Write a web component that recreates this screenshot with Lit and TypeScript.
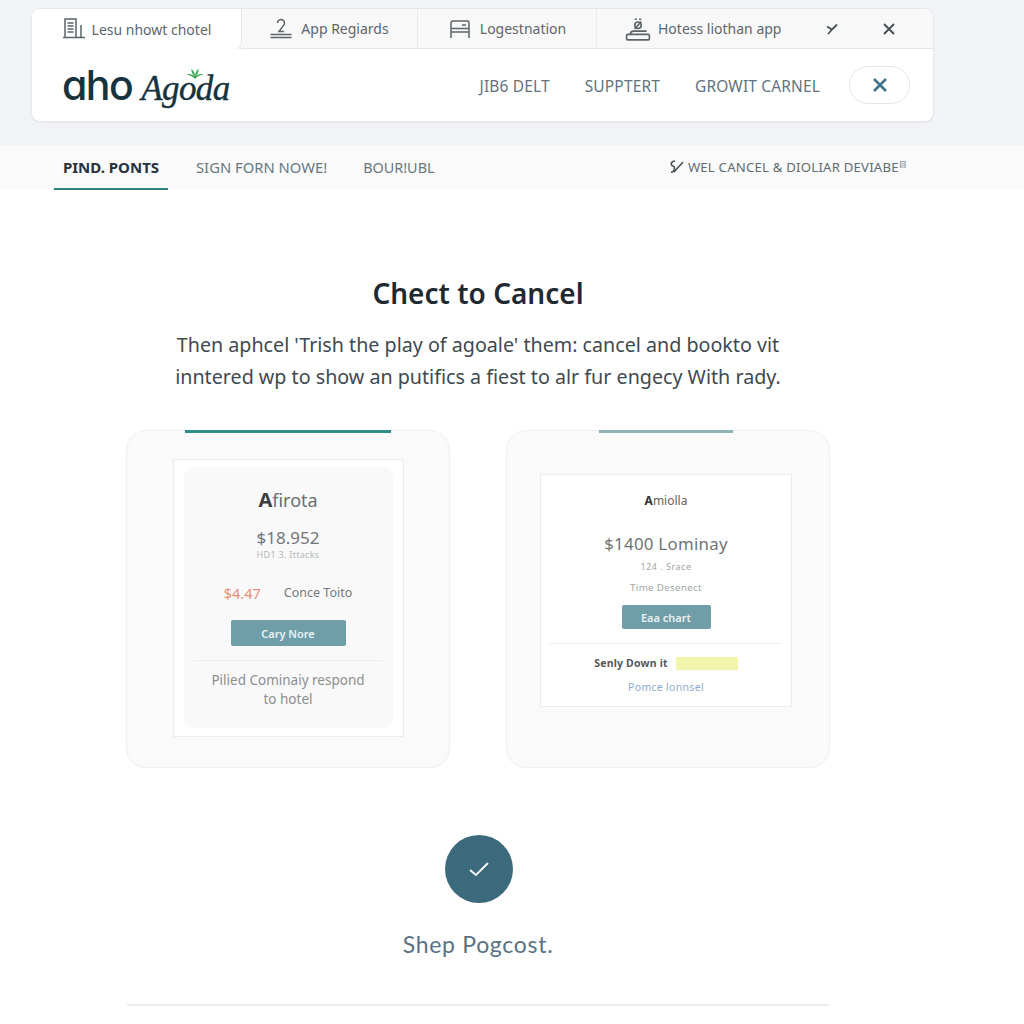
import { LitElement, html, css, svg } from "lit";
import { customElement } from "lit/decorators.js";

const ic = (w: number, body: unknown) => html`<svg width=${w} height=${w} viewBox="0 0 24 24" fill="none" stroke="#5b6468" stroke-width="1.5">${body}</svg>`;

@customElement("app-root")
export class AppRoot extends LitElement {
  static styles = css`
    :host { display: block; width: 1024px; height: 1024px; overflow: hidden; background: #fff; font-family: "Noto Sans", "Open Sans", sans-serif; color: #2c3a42; }
    .top { background: #f2f3f6; height: 145px; padding: 9px 0 0 32px; box-sizing: border-box; }
    .win { width: 901px; height: 112px; box-sizing: border-box; background: #fff; border-radius: 8px; box-shadow: 0 0 0 1px #e6e7ea, 0 1px 2px #d9dadd; overflow: hidden; }
    .tabs { display: flex; height: 40px; background: #f8f8f9; }
    .tab { display: flex; align-items: center; justify-content: center; gap: 8px; font-size: 14px; color: #5d666c; border-right: 1px solid #e9eaec; border-bottom: 1px solid #e4e5e8; box-sizing: border-box; white-space: nowrap; }
    .tab.on { width: 209px; background: #fff; border: 0; border-bottom-right-radius: 7px; box-shadow: 1px 0 0 #e4e5e8; gap: 6px; }
    .t2 { width: 177px; } .t3 { width: 179px; }
    .t4 { width: 336px; border-right: 0; justify-content: flex-start; padding-left: 28px; gap: 7px; }
    .t4 .glyphs { display: flex; align-items: center; margin-left: auto; margin-right: 38px; gap: 45px; }
    .head { height: 72px; display: flex; align-items: center; padding: 0 23px 0 30px; }
    .logo { display: flex; align-items: baseline; gap: 9px; color: #17333d; position: relative; }
    .aho { font: 500 41px/1 "Inter", sans-serif; font-feature-settings: "cv11" 1; letter-spacing: -1.5px; color: #17333d; }
    .agoda { font: italic 400 35px/1 "Liberation Serif", serif; letter-spacing: -0.6px; -webkit-text-stroke: 0.4px #17333d; }
    .leaf { position: absolute; left: 123px; top: 3px; }
    .links { margin-left: auto; display: flex; gap: 35px; font-size: 15.5px; letter-spacing: 0.15px; color: #5f7380; padding-top: 2px; }
    .close { margin-left: 29px; width: 61px; height: 38px; border-radius: 19px; border: 1px solid #e3e6e8; display: flex; align-items: center; justify-content: center; box-sizing: border-box; }
    .sub { height: 44px; background: #fafafa; display: flex; padding-left: 54px; padding-right: 117px; font-size: 14.8px; color: #68787f; }
    .sub > div { display: flex; align-items: center; box-sizing: border-box; }
    .pick { width: 114px; justify-content: center; font-weight: 700; color: #283238; border-bottom: 2px solid #2f8279; height: 45px; font-size: 15px; }
    .s2 { margin-left: 28px; } .s3 { margin-left: 36px; font-size: 14.4px; }
    .note { margin-left: auto; font-size: 13.2px; color: #5f6c72; gap: 3px; letter-spacing: 0.2px; }
    sup { font-size: 8px; }
    .main { width: 704px; margin-left: 126px; display: flex; flex-direction: column; align-items: center; }
    h1 { margin: 85px 0 0; font-size: 28px; line-height: 38px; font-weight: 600; color: #1f2a30; white-space: nowrap; }
    .lede { margin: 17px 0 0; font-size: 19.7px; line-height: 32px; color: #3f4a50; text-align: center; white-space: nowrap; }
    .cards { display: flex; gap: 56px; margin-top: 37px; width: 100%; }
    .card { width: 324px; height: 338px; box-sizing: border-box; background: #fafafa; border: 1px solid #efefef; border-radius: 20px; position: relative; display: flex; justify-content: center; }
    .bar { position: absolute; top: -1px; height: 3px; }
    .b1 { left: 58px; width: 206px; background: #2f8f88; }
    .b2 { left: 92px; width: 134px; background: #8fb3b5; }
    .frame { background: #fff; border: 1px solid #ececec; box-sizing: border-box; display: flex; flex-direction: column; align-items: center; }
    .f1 { width: 231px; height: 278px; margin-top: 28px; padding: 7px 10px; }
    .inner { width: 209px; height: 261px; background: #f9f9f9; border-radius: 10px; display: flex; flex-direction: column; align-items: center; box-sizing: border-box; }
    .brand { margin-top: 21px; font-size: 18px; line-height: 24px; color: #6a6f72; }
    .brand b { font-size: 20px; color: #3b3f42; }
    .price { margin-top: 16px; font-size: 17px; line-height: 20px; color: #71767a; }
    .tiny { font-size: 9px; line-height: 14px; color: #b4b8ba; letter-spacing: 0.3px; }
    .row { display: flex; gap: 23px; margin-top: 21px; align-items: center; font-size: 12.5px; color: #74797c; line-height: 20px; }
    .red { color: #e5907a; font-size: 14.5px; }
    .btn { background: #6f9ea8; color: #e8f2f3; border-radius: 2px; display: flex; align-items: center; justify-content: center; font-size: 11px; font-weight: 600; }
    .bt1 { width: 115px; height: 26px; margin-top: 17px; }
    .rule { height: 1px; background: #eeeeee; }
    .r1 { width: 188px; margin-top: 14px; }
    .foot { margin-top: 10px; font-size: 13.5px; line-height: 19px; color: #8b8f92; text-align: center; white-space: nowrap; }
    .f2 { width: 252px; height: 233px; margin-top: 43px; margin-right: 4px; }
    .mini { margin-top: 16px; font-size: 12px; line-height: 20px; color: #5f6365; }
    .mini b { color: #333; }
    .big { margin-top: 22px; font-size: 16.8px; line-height: 22px; color: #6f7376; letter-spacing: 0.3px; }
    .p2 { margin-top: 5px; font-size: 9px; line-height: 14px; color: #a0a4a6; letter-spacing: 0.5px; }
    .p3 { margin-top: 7px; font-size: 9.8px; line-height: 14px; color: #a3a7a9; letter-spacing: 0.3px; }
    .bt2 { width: 89px; height: 24px; margin-top: 10px; }
    .r2 { width: 232px; margin-top: 14px; }
    .hl { display: flex; align-items: center; gap: 8px; margin-top: 12px; font-size: 10.5px; font-weight: 700; color: #55585a; line-height: 14px; letter-spacing: 0.2px; }
    .hl i { width: 62px; height: 13px; background: #f3f5ac; display: block; }
    .lnk { margin-top: 10px; font-size: 10.5px; line-height: 14px; color: #8eaacb; letter-spacing: 0.3px; }
    .ok { width: 68px; height: 68px; border-radius: 50%; background: #3c6a7d; margin: 67px 0 0 2px; display: flex; align-items: center; justify-content: center; }
    .step { margin-top: 26px; font-size: 23px; line-height: 30px; color: #5a7182; font-family: "Lato", sans-serif; letter-spacing: 0.7px; }
    .line { width: 702px; height: 2px; background: #ececec; margin-top: 45px; }
  `;

  render() {
    return html`
      <div class="top">
        <div class="win">
          <div class="tabs">
            <div class="tab on">
              ${ic(24, svg`<path d="M1 20.5h22M3 20.5V2h11v18.5M5.5 6h6M5.5 9h6M5.5 12h6M5.5 15h6M19 8v12.5" />`)}
              <span>Lesu nhowt chotel</span>
            </div>
            <div class="tab t2">
              ${ic(24, svg`<path d="M8.5 6a3.5 3.5 0 1 1 6 2.4L10 14.5h5M1.5 17.5h21M1.5 20.5h21"/>`)}
              <span>App Regiards</span>
            </div>
            <div class="tab t3">
              ${ic(24, svg`<path d="M3 21V5.5A1.5 1.5 0 0 1 4.500 4h15A1.500 1.500 0 0 1 21 5.500V21M3 15h18M3 11.500h18M14 8h4"/>`)}
              <span>Logestnation</span>
            </div>
            <div class="tab t4">
              ${ic(26, svg`<rect x="1.500" y="17" width="21" height="5" rx="1"/><path d="M5 17c0-2 1-3 3-3h12"/><circle cx="12" cy="8.500" r="3"/><path d="M9 3h2M13 3h2M9 12l6-7"/>`)}
              <span>Hotess liothan app</span>
              <span class="glyphs">
                <svg width="12" height="12" viewBox="0 0 12 12" fill="none" stroke="#4a5257" stroke-width="1.800"><path d="M1 3.500l5 3 5-5M6 6.500l-4 4.500"/></svg>
                <svg width="12" height="12" viewBox="0 0 12 12" fill="none" stroke="#454c50" stroke-width="1.800"><path d="M1 1l10 10M11 1L1 11"/></svg>
              </span>
            </div>
          </div>
          <div class="head">
            <div class="logo">
              <span class="aho">aho</span><span class="agoda">Agoda</span>
              <svg class="leaf" width="20" height="11" viewBox="0 0 20 12" fill="#49a85c"><path d="M10 12C7 9 5 8 1 7c3-1 6 0 8 2-2-3-3-5-3-8 2 1 4 4 4 8 0-4 2-7 4-8 0 3-1 5-3 8 2-2 5-3 8-2-4 1-6 2-9 5z"/></svg>
            </div>
            <div class="links"><span>JIB6 DELT</span><span>SUPPTERT</span><span>GROWIT CARNEL</span></div>
            <div class="close"><svg width="16" height="16" viewBox="0 0 16 16" fill="none" stroke="#3f7488" stroke-width="2.600"><path d="M2 2l12 12M14 2L2 14"/></svg></div>
          </div>
        </div>
      </div>
      <div class="sub">
        <div class="pick">PIND. PONTS</div>
        <div class="s2">SIGN FORN NOWE!</div>
        <div class="s3">BOUR!UBL</div>
        <div class="note">
          <svg width="18" height="16" viewBox="0 0 18 16" fill="none" stroke="#4a5358" stroke-width="1.600"><path d="M8 2C4 2 3 6 6 7s1 7-2 6M7 13l9-10"/></svg>
          <span>WEL CANCEL &amp; DIOLIAR DEVIABE<sup>目</sup></span>
        </div>
      </div>
      <div class="main">
        <h1>Chect to Cancel</h1>
        <p class="lede">Then aphcel 'Trish the play of agoale' them: cancel and bookto vit<br>inntered wp to show an putifics a fiest to alr fur engecy With rady.</p>
        <div class="cards">
          <div class="card">
            <div class="bar b1"></div>
            <div class="frame f1">
              <div class="inner">
                <div class="brand"><b>A</b>firota</div>
                <div class="price">$18.952</div>
                <div class="tiny">HD1 3. Ittacks</div>
                <div class="row"><span class="red">$4.47</span><span>Conce Toito</span></div>
                <div class="btn bt1">Cary Nore</div>
                <div class="rule r1"></div>
                <div class="foot">Pilied Cominaiy respond<br>to hotel</div>
              </div>
            </div>
          </div>
          <div class="card">
            <div class="bar b2"></div>
            <div class="frame f2">
              <div class="mini"><b>A</b>miolla</div>
              <div class="big">$1400 Lominay</div>
              <div class="p2">124 . Srace</div>
              <div class="p3">Time Desenect</div>
              <div class="btn bt2">Eaa chart</div>
              <div class="rule r2"></div>
              <div class="hl"><span>Senly Down it</span><i></i></div>
              <div class="lnk">Pomce lonnsel</div>
            </div>
          </div>
        </div>
        <div class="ok"><svg width="22" height="18" viewBox="0 0 22 18" fill="none" stroke="#f2f6f7" stroke-width="2"><path d="M2 10l6 5L20 3"/></svg></div>
        <div class="step">Shep Pogcost.</div>
        <div class="line"></div>
      </div>
    `;
  }
}
